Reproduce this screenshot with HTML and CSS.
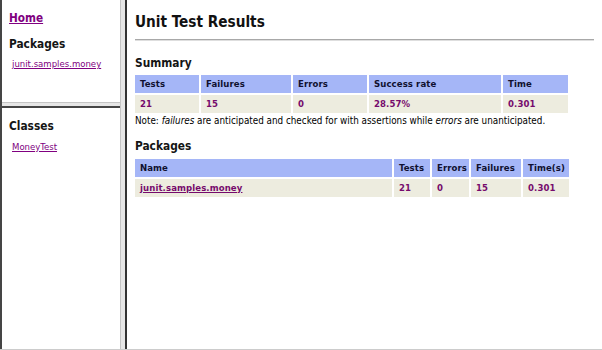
FILE: index.html
```html
<!DOCTYPE html>
<html>
<head>
<meta charset="utf-8">
<title>Unit Test Results</title>
<link rel="stylesheet" href="styles.css">
</head>
<body>
<div class="frameset">
  <div class="side">
    <div class="pane pane-top">
      <a class="home" href="#">Home</a>
      <h2 class="side-h">Packages</h2>
      <a class="side-link" href="#">junit.samples.money</a>
    </div>
    <div class="hsplit"></div>
    <div class="pane pane-bottom">
      <h2 class="side-h">Classes</h2>
      <a class="side-link" href="#">MoneyTest</a>
    </div>
  </div>
  <div class="vsplit"></div>
  <div class="main">
    <h1>Unit Test Results</h1>
    <div class="rule"></div>
    <h2 class="sec">Summary</h2>
    <table class="details summary">
      <tr>
        <th class="c-tests">Tests</th>
        <th class="c-fail">Failures</th>
        <th class="c-err">Errors</th>
        <th class="c-rate">Success rate</th>
        <th class="c-time">Time</th>
      </tr>
      <tr>
        <td>21</td>
        <td>15</td>
        <td>0</td>
        <td>28.57%</td>
        <td>0.301</td>
      </tr>
    </table>
    <p class="note">Note: <i>failures</i> are anticipated and checked for with assertions while <i>errors</i> are unanticipated.</p>
    <h2 class="sec">Packages</h2>
    <table class="details packages">
      <tr>
        <th class="p-name">Name</th>
        <th class="p-tests">Tests</th>
        <th class="p-err">Errors</th>
        <th class="p-fail">Failures</th>
        <th class="p-time">Time(s)</th>
      </tr>
      <tr>
        <td><a href="#">junit.samples.money</a></td>
        <td>21</td>
        <td>0</td>
        <td>15</td>
        <td>0.301</td>
      </tr>
    </table>
  </div>
</div>
</body>
</html>
```

FILE: styles.css
```css
html, body {
  margin: 0;
  padding: 0;
  background: #ffffff;
}

body {
  font-family: "DejaVu Sans Condensed", "DejaVu Sans", sans-serif;
  font-stretch: condensed;
  color: #000000;
  overflow: hidden;
}

a {
  color: #800080;
  text-decoration: underline;
}

.frameset {
  display: grid;
  grid-template-columns: 121px 4px 1fr;
  height: 349px;
  border-bottom: 1px solid #cccccc;
}

.side {
  display: flex;
  flex-direction: column;
  border-left: 2px solid #454545;
  border-right: 1px solid #c4c4c4;
  min-width: 0;
}

.pane {
  padding-left: 7px;
  display: flex;
  flex-direction: column;
  align-items: flex-start;
}

.pane-top {
  height: 91px;
  padding-top: 11px;
  border-bottom: 1px solid #c4c4c4;
}

.hsplit {
  height: 3px;
  background: #e6e6e6;
}

.pane-bottom {
  flex: 1;
  border-top: 2px solid #454545;
  padding-top: 11px;
}

.vsplit {
  background: #e6e6e6;
}

.home {
  font-size: 11.7px;
  font-weight: bold;
  line-height: 15px;
}

.side-h {
  margin: 11px 0 6px;
  font-size: 11.8px;
  font-weight: bold;
  line-height: 15px;
  color: #151515;
}

.pane-bottom .side-h {
  margin-top: 0;
  margin-bottom: 7px;
}

.side-link {
  margin-left: 3px;
  font-size: 9.5px;
  line-height: 12px;
}

.main {
  border-left: 2px solid #333333;
  padding: 12px 8px 0 8px;
  min-width: 0;
}

h1 {
  margin: 0;
  font-size: 15.2px;
  font-weight: bold;
  line-height: 20px;
  color: #111111;
}

.rule {
  margin-top: 7px;
  border-top: 1px solid #a8a8a8;
  border-bottom: 1px solid #dedede;
}

.sec {
  margin: 15px 0 2px;
  font-size: 11.8px;
  font-weight: bold;
  line-height: 15px;
  color: #151515;
}

table.details {
  border-spacing: 2px;
  margin-left: -2px;
  font-size: 9.5px;
  letter-spacing: 0.1px;
  table-layout: fixed;
}

table.details th,
table.details td {
  height: 18px;
  padding: 0 0 0 5px;
  line-height: 18px;
  text-align: left;
  white-space: nowrap;
  font-weight: bold;
  box-sizing: border-box;
}

table.details th {
  background: #a5b6f7;
  color: #101030;
}

table.details td {
  background: #edecdf;
  color: #760a6c;
}

table.details td a {
  color: #760a6c;
}

.summary { width: 437px; }
.c-tests { width: 64px; }
.c-fail { width: 90px; }
.c-err { width: 74px; }
.c-rate { width: 132px; }
.c-time { width: 65px; }

.packages { width: 438px; }
.p-name { width: 257px; }
.p-tests { width: 36px; }
.p-err { width: 37px; }
.p-fail { width: 50px; }
.p-time { width: 46px; }

.note {
  margin: 0;
  font-size: 9.8px;
  line-height: 12px;
}

.note + .sec {
  margin-top: 12px;
  margin-bottom: 3px;
}
```
